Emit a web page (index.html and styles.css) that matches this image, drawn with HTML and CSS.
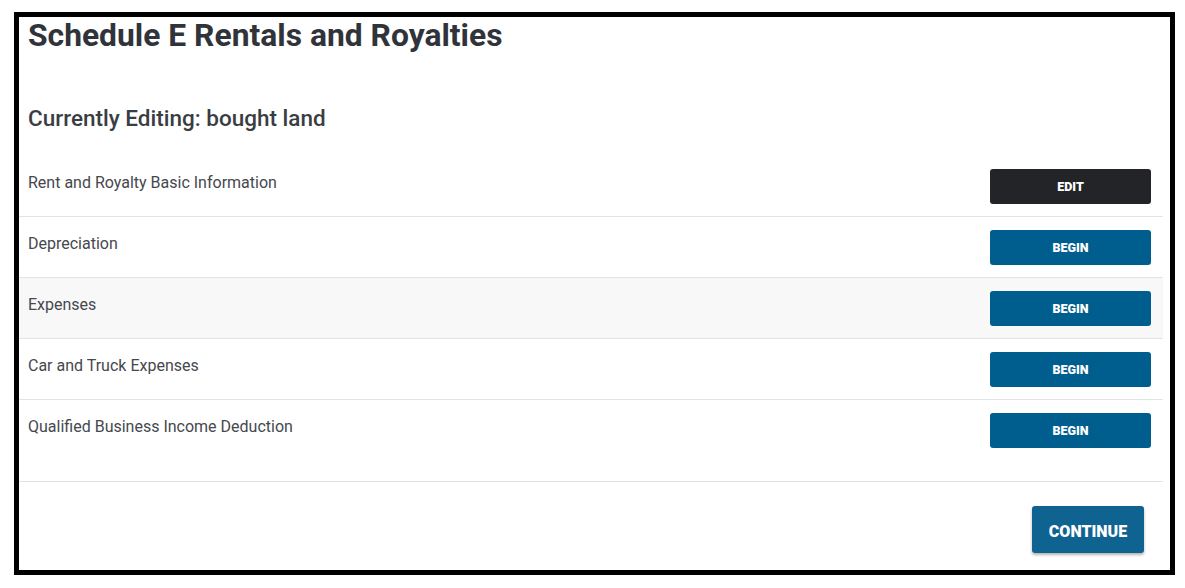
FILE: index.html
```html
<!DOCTYPE html>
<html lang="en">
<head>
  <meta charset="UTF-8">
  <meta name="viewport" content="width=device-width, initial-scale=1.0">
  <title>Schedule E Rentals and Royalties</title>
  <link rel="stylesheet" href="styles.css">
</head>
<body>
  <div class="frame">
    <h1>Schedule E Rentals and Royalties</h1>
    <h2>Currently Editing: bought land</h2>

    <div class="sections">
      <div class="section">
        <span class="label">Rent and Royalty Basic Information</span>
        <button class="btn edit">Edit</button>
      </div>
      <div class="section">
        <span class="label">Depreciation</span>
        <button class="btn begin">Begin</button>
      </div>
      <div class="section shaded">
        <span class="label">Expenses</span>
        <button class="btn begin">Begin</button>
      </div>
      <div class="section">
        <span class="label">Car and Truck Expenses</span>
        <button class="btn begin">Begin</button>
      </div>
      <div class="section last">
        <span class="label">Qualified Business Income Deduction</span>
        <button class="btn begin">Begin</button>
      </div>
    </div>

    <div class="footer">
      <button class="continue">Continue</button>
    </div>
  </div>
</body>
</html>
```

FILE: styles.css
```css
body {
  margin: 0;
  background: #ffffff;
  font-family: Roboto, 'Liberation Sans', sans-serif;
  color: #333333;
}

.frame {
  margin: 12px 10px 0 14px;
  border: 5px solid #000000;
  height: 553px;
  box-sizing: content-box;
}

h1 {
  margin: 0;
  padding-left: 9px;
  font-size: 31.8px;
  font-weight: 700;
  line-height: 36px;
  color: #30343a;
}

h2 {
  margin: 53px 0 0;
  padding-left: 9px;
  font-size: 22.5px;
  font-weight: 500;
  line-height: 24px;
  color: #3a3d42;
}

.sections {
  margin: 26px 7px 0 0;
}

.section {
  display: flex;
  justify-content: space-between;
  align-items: flex-start;
  height: 60px;
  padding: 0 12px 0 9px;
  border-bottom: 1px solid #e3e3e3;
}

.section.shaded {
  background-color: #f8f8f8;
}

.section.last {
  height: 81px;
}

.label {
  margin-top: 16px;
  font-size: 16px;
  line-height: 22px;
  color: #45484d;
}

.btn {
  margin-top: 13px;
  width: 161px;
  height: 35px;
  border: none;
  border-radius: 3px;
  font-family: Roboto, 'Liberation Sans', sans-serif;
  font-size: 12.5px;
  font-weight: 900;
  text-transform: uppercase;
  color: #ffffff;
  cursor: pointer;
}

.edit {
  background-color: #232428;
}

.begin {
  background-color: #005e8e;
}

.footer {
  display: flex;
  justify-content: flex-end;
  padding: 24px 26px 0 0;
}

.continue {
  width: 112px;
  height: 47px;
  padding: 4px 0 0;
  border: none;
  border-radius: 3px;
  background-color: #0f6391;
  box-shadow: 0 2px 3px rgba(0, 0, 0, 0.3);
  font-family: Roboto, 'Liberation Sans', sans-serif;
  font-size: 16px;
  font-weight: 900;
  text-transform: uppercase;
  color: #ffffff;
  cursor: pointer;
}
```
